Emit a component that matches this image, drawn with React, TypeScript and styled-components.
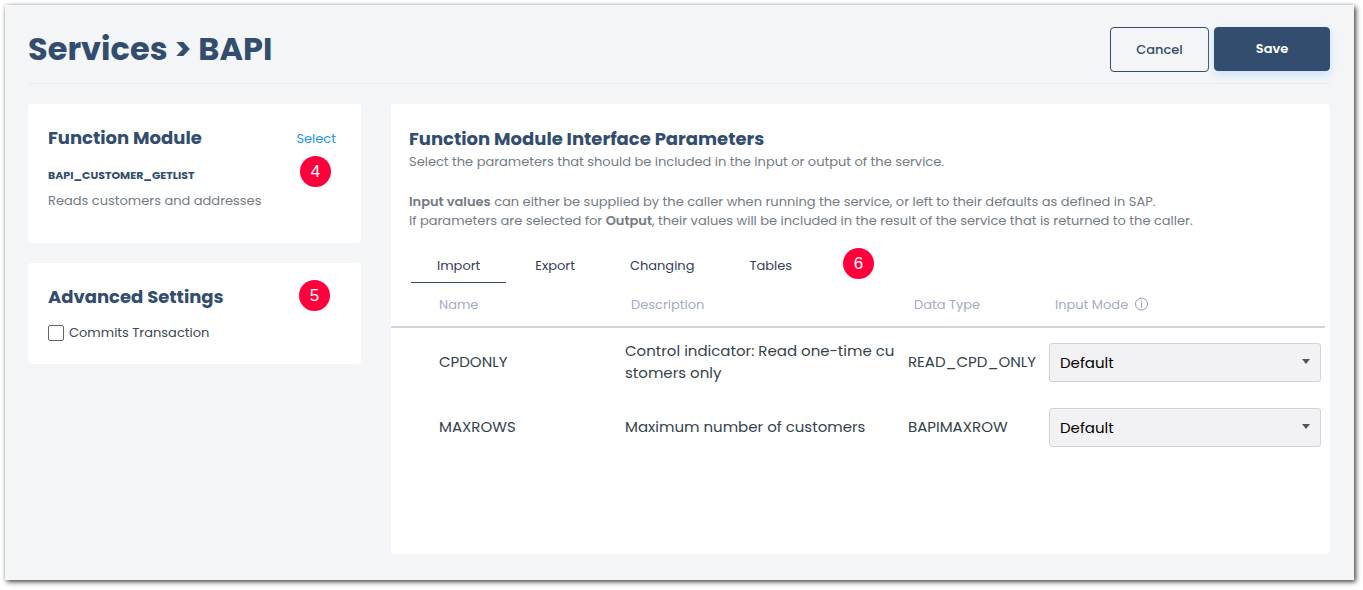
import React from "react";
import styled, { createGlobalStyle } from "styled-components";

const GlobalStyle = createGlobalStyle`
  * { box-sizing: border-box; }
  body {
    margin: 0;
    background: #fff;
    color: #34495e;
    font-family: Poppins, Inter, "Liberation Sans", sans-serif;
    font-size: 13px;
    line-height: 19px;
    font-weight: 400;
  }
  button, input, select { font-family: inherit; font-weight: inherit; }
`;

const Window = styled.main`
  margin: 5px 9px 10px 5px;
  min-height: calc(100vh - 15px);
  padding: 22px 24px 26px 23px;
  background: #f4f5f7;
  box-shadow: 2px 2px 5px rgba(0, 0, 0, 0.7), 0 0 4px rgba(0, 0, 0, 0.15);
  display: flex;
  flex-direction: column;
`;

const Header = styled.header`
  display: flex;
  align-items: flex-start;
  justify-content: space-between;
  height: 57px;
  margin-bottom: 20px;
  border-bottom: 1px solid #e8ebef;
`;

const PageTitle = styled.h1`
  margin: 0;
  color: #324d6e;
  font-size: 32px;
  line-height: 44px;
  font-weight: 700;
`;

const Actions = styled.div`
  display: flex;
  gap: 5px;
`;

const Button = styled.button<{ $primary?: boolean }>`
  height: ${(p) => (p.$primary ? 44 : 45)}px;
  width: ${(p) => (p.$primary ? 116 : 99)}px;
  padding: 0;
  border: 1px solid #324d6e;
  border-radius: 4px;
  background: ${(p) => (p.$primary ? "#324d6e" : "transparent")};
  color: ${(p) => (p.$primary ? "#fff" : "#324d6e")};
  font-size: 13px;
  font-weight: ${(p) => (p.$primary ? 600 : 500)};
  box-shadow: ${(p) => (p.$primary ? "0 3px 8px #c4dffa" : "none")};
`;

const Columns = styled.div`
  display: grid;
  grid-template-columns: 333px minmax(0, 1fr);
  gap: 30px;
  flex: 1;
`;

const Sidebar = styled.div`
  display: flex;
  flex-direction: column;
  gap: 20px;
`;

const Card = styled.section`
  position: relative;
  background: #fff;
  border-radius: 4px;
`;

const SideCard = styled(Card)<{ $bottom: number }>`
  padding: 22px 25px ${(p) => p.$bottom}px 20px;
`;

const CardHead = styled.div`
  display: flex;
  align-items: center;
  justify-content: space-between;
`;

const CardTitle = styled.h2`
  margin: 0;
  color: #324d6e;
  font-size: 18px;
  line-height: 24px;
  font-weight: 700;
`;

const SelectLink = styled.a`
  color: #2196f3;
  text-decoration: none;
`;

const ModuleName = styled.h3`
  margin: 15px 0 6px;
  color: #324d6e;
  font-size: 11px;
  line-height: 20px;
  font-weight: 700;
`;

const Muted = styled.p`
  margin: 0;
  color: #737b83;
  b { font-weight: 600; }
`;

const CheckLabel = styled.label`
  display: flex;
  align-items: center;
  gap: 5px;
  margin-top: 14px;
  color: #3c4652;
`;

const Checkbox = styled.input`
  width: 16px;
  height: 16px;
  margin: 0;
  appearance: none;
  background: #fff;
  border: 1px solid #666;
  border-radius: 2px;
  &:checked { background: #324d6e; }
`;

const Badge = styled.span<{ $x: number; $y: number }>`
  position: absolute;
  left: ${(p) => p.$x}px;
  top: ${(p) => p.$y}px;
  width: 31px;
  height: 31px;
  border-radius: 50%;
  background: #ff003c;
  color: #fff;
  font-family: "Liberation Sans", sans-serif;
  font-size: 17px;
  line-height: 31px;
  text-align: center;
`;

const Panel = styled(Card)`
  padding: 23px 5px 20px 0;
`;

const Intro = styled.div`
  display: flex;
  flex-direction: column;
  padding-left: 18px;
  ${Muted}:nth-child(2) { margin: 1px 0 21px; }
`;

const Tabs = styled.div`
  display: flex;
  gap: 3px;
  padding-left: 20px;
  margin-top: 19px;
`;

const Tab = styled.button<{ $active?: boolean }>`
  height: 34px;
  padding: 0 26px;
  border: 0;
  border-bottom: 1px solid ${(p) => (p.$active ? "#324d6e" : "transparent")};
  background: none;
  color: #34405c;
  font-size: 13px;
`;

const Table = styled.table`
  width: 100%;
  border-collapse: separate;
  border-spacing: 0;
  table-layout: fixed;
`;

const Th = styled.th<{ $width?: number }>`
  width: ${(p) => (p.$width ? `${p.$width}px` : "auto")};
  height: 45px;
  padding: 0 4px 1px 12px;
  border-bottom: 2px solid #ced4da;
  color: #a3adbf;
  font-size: 13px;
  font-weight: inherit;
  text-align: left;
  &:first-child { padding-left: 48px; }
`;

const ThInner = styled.span`
  display: flex;
  align-items: center;
  gap: 6px;
`;

const Td = styled.td`
  height: 65px;
  padding: 3px 4px 0 6px;
  color: #34424a;
  font-size: 15px;
  line-height: 22px;
  word-break: break-all;
  &:first-child { padding-left: 48px; }
`;

const SelectWrap = styled.div`
  position: relative;
`;

const Select = styled.select`
  display: block;
  width: 100%;
  height: 39px;
  padding: 0 28px 0 10px;
  border: 1px solid #ced4da;
  border-radius: 3px;
  background: #f2f2f5;
  color: #000;
  font-size: 15px;
  appearance: none;
`;

const Arrow = styled.svg`
  position: absolute;
  right: 11px;
  top: 16px;
  pointer-events: none;
`;

const rows = [
  { name: "CPDONLY", description: "Control indicator: Read one-time customers only", type: "READ_CPD_ONLY" },
  { name: "MAXROWS", description: "Maximum number of customers", type: "BAPIMAXROW" },
];

const InfoIcon = () => (
  <svg width="15" height="14" viewBox="0 0 15 14" fill="none" stroke="#8f9bb0">
    <circle cx="7.500" cy="7" r="6" />
    <path d="M7.500 6v4.500M7.500 3.500v1.200" />
  </svg>
);

export default function App() {
  return (
    <>
      <GlobalStyle />
      <Window>
        <Header>
          <PageTitle>Services &gt; BAPI</PageTitle>
          <Actions>
            <Button type="button">Cancel</Button>
            <Button type="button" $primary>Save</Button>
          </Actions>
        </Header>
        <Columns>
          <Sidebar>
            <SideCard $bottom={33}>
              <CardHead>
                <CardTitle>Function Module</CardTitle>
                <SelectLink href="#select">Select</SelectLink>
              </CardHead>
              <ModuleName>BAPI_CUSTOMER_GETLIST</ModuleName>
              <Muted>Reads customers and addresses</Muted>
              <Badge $x={272} $y={52}>4</Badge>
            </SideCard>
            <SideCard $bottom={22}>
              <CardTitle>Advanced Settings</CardTitle>
              <CheckLabel>
                <Checkbox type="checkbox" />
                Commits Transaction
              </CheckLabel>
              <Badge $x={271} $y={17}>5</Badge>
            </SideCard>
          </Sidebar>
          <Panel>
            <Intro>
              <CardTitle>Function Module Interface Parameters</CardTitle>
              <Muted>Select the parameters that should be included in the input or output of the service.</Muted>
              <Muted>
                <b>Input values</b> can either be supplied by the caller when running the service, or left to their defaults as defined in SAP.
                <br />
                If parameters are selected for <b>Output</b>, their values will be included in the result of the service that is returned to the caller.
              </Muted>
            </Intro>
            <Tabs role="tablist">
              <Tab type="button" role="tab" aria-selected $active>Import</Tab>
              <Tab type="button" role="tab">Export</Tab>
              <Tab type="button" role="tab">Changing</Tab>
              <Tab type="button" role="tab">Tables</Tab>
            </Tabs>
            <Table>
              <thead>
                <tr>
                  <Th $width={228}>Name</Th>
                  <Th $width={283}>Description</Th>
                  <Th $width={141}>Data Type</Th>
                  <Th>
                    <ThInner>
                      Input Mode <InfoIcon />
                    </ThInner>
                  </Th>
                </tr>
              </thead>
              <tbody>
                {rows.map((row) => (
                  <tr key={row.name}>
                    <Td>{row.name}</Td>
                    <Td>{row.description}</Td>
                    <Td>{row.type}</Td>
                    <Td>
                      <SelectWrap>
                        <Select aria-label={`Input mode for ${row.name}`} defaultValue="Default">
                          <option>Default</option>
                        </Select>
                        <Arrow width="8" height="5" viewBox="0 0 8 5">
                          <path d="M0 0h8L4 5z" fill="#555" />
                        </Arrow>
                      </SelectWrap>
                    </Td>
                  </tr>
                ))}
              </tbody>
            </Table>
            <Badge $x={452} $y={144}>6</Badge>
          </Panel>
        </Columns>
      </Window>
    </>
  );
}
